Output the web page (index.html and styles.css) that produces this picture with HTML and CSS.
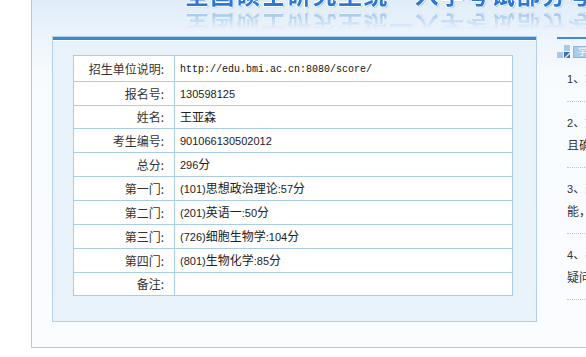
FILE: index.html
```html
<!DOCTYPE html>
<html lang="zh-CN">
<head>
<meta charset="utf-8">
<title>成绩查询</title>
<link rel="stylesheet" href="styles.css">
</head>
<body>
<div class="page">
  <div class="panel">
    <div class="banner">
      <div class="title">全国硕士研究生统一入学考试部分考生成绩查询</div>
    </div>
    <div class="content">
      <div class="main">
        <table class="score">
          <colgroup><col class="c-label"><col class="c-value"></colgroup>
          <tr><td class="lab">招生单位说明:</td><td class="val"><span class="url">http://edu.bmi.ac.cn:8080/score/</span></td></tr>
          <tr><td class="lab">报名号:</td><td class="val"><span class="n">130598125</span></td></tr>
          <tr><td class="lab">姓名:</td><td class="val">王亚森</td></tr>
          <tr><td class="lab">考生编号:</td><td class="val"><span class="n">901066130502012</span></td></tr>
          <tr><td class="lab">总分:</td><td class="val"><span class="n">296</span>分</td></tr>
          <tr><td class="lab">第一门:</td><td class="val"><span class="n">(101)</span>思想政治理论<span class="n">:57</span>分</td></tr>
          <tr><td class="lab">第二门:</td><td class="val"><span class="n">(201)</span>英语一<span class="n">:50</span>分</td></tr>
          <tr><td class="lab">第三门:</td><td class="val"><span class="n">(726)</span>细胞生物学<span class="n">:104</span>分</td></tr>
          <tr><td class="lab">第四门:</td><td class="val"><span class="n">(801)</span>生物化学<span class="n">:85</span>分</td></tr>
          <tr><td class="lab">备注:</td><td class="val"></td></tr>
        </table>
      </div>
      <aside class="side">
        <div class="side-head">
          <svg class="side-icon" width="14" height="13" viewBox="0 0 14 13">
            <rect x="7" y="0" width="6" height="6" fill="#a8c8ec"/>
            <rect x="0" y="7" width="6" height="6" fill="#a8c8ec"/>
            <rect x="7" y="7" width="6" height="6" fill="#3f6fae"/>
            <polygon points="13,7 13,9 9,13 7,13" fill="#dfeaf7"/>
          </svg>
          <span class="tab">学生须知</span>
        </div>
        <ul class="notes">
          <li><span class="n">1</span>、本系统仅提供部分考生成绩查询</li>
          <li><span class="n">2</span>、如对成绩有异议请于规定时间内<br>且确认本人信息无误后提出申请</li>
          <li><span class="n">3</span>、查询结果仅供参考不作为录取依据<br>能，以招生单位正式通知为准</li>
          <li><span class="n">4</span>、考生如有其他问题请咨询招生单位<br>疑问请及时与研招办联系</li>
        </ul>
      </aside>
    </div>
  </div>
  <div class="rule"></div>
</div>
</body>
</html>
```

FILE: styles.css
```css
html, body {
  margin: 0;
  padding: 0;
  overflow: hidden;
  background: #ffffff;
}

body {
  font-family: "Noto Sans CJK SC", "Noto Sans", sans-serif;
  font-size: 12px;
  color: #333333;
}

.page {
  margin-left: 31px;
  width: 1000px;
}

.panel {
  border-left: 1px solid #a9cbea;
  border-bottom: 1px solid #a9cbea;
  background: linear-gradient(to bottom, #dfecf8 0px, #eef5fc 40px, #f8fbfe 80px, #fafcfe 100%);
  padding-bottom: 25px;
}

.banner {
  height: 36px;
  overflow: hidden;
  padding-left: 153px;
}

.title {
  margin-top: -22px;
  height: 32px;
  font-size: 24px;
  line-height: 32px;
  font-weight: bold;
  letter-spacing: 1.5px;
  white-space: nowrap;
  color: #2d78d3;
  text-shadow: 1px 0 0 #fff, -1px 0 0 #fff, 0 1px 0 #fff, 0 -1px 0 #fff, 1px 1px 1px #7fa9d8;
  -webkit-box-reflect: below 0px linear-gradient(to bottom, rgba(0,0,0,0) 40%, rgba(0,0,0,0.2) 72%, rgba(0,0,0,0.42) 100%);
}

.content {
  display: flex;
  align-items: flex-start;
  gap: 20px;
  padding-left: 20px;
}

.main {
  flex: none;
  width: 485px;
  box-sizing: border-box;
  border: 1px solid #b3cfec;
  background: #e8f2fb;
  box-shadow: inset 0 3px 0 #3b8ad1, inset 0 4px 0 #ffffff;
  padding: 18px 0 25px 20px;
}

.score {
  border-collapse: separate;
  border-spacing: 0;
  table-layout: fixed;
  box-sizing: border-box;
  width: 440px;
  border-top: 1px solid #a9cbec;
  border-left: 1px solid #a9cbec;
  background: #ffffff;
}

.c-label { width: 101px; }
.c-value { width: 338px; }

.score td {
  height: 22px;
  padding: 0;
  line-height: 22px;
  border-right: 1px solid #a9cbec;
  border-bottom: 1px solid #a9cbec;
  white-space: nowrap;
  overflow: hidden;
}

.score td.lab {
  text-align: right;
  padding-right: 10px;
  color: #333333;
}

.score td.val {
  padding-left: 5px;
  color: #222222;
}

.n {
  font-family: "Liberation Sans", sans-serif;
  font-size: 11px;
}

.url {
  font-family: "Liberation Mono", monospace;
  font-size: 10px;
  color: #111111;
}

.side {
  flex: none;
  width: 300px;
  margin-top: 1px;
  border-top: 2px solid #3d8bd3;
}

.side-head {
  display: flex;
  align-items: flex-end;
  gap: 2px;
  margin-top: 6px;
}

.side-icon {
  display: block;
}

.tab {
  height: 10px;
  line-height: 10px;
  padding: 0 4px;
  font-size: 9px;
  color: #ffffff;
  background: #a9cbee;
  border: 1px solid #8fb6e0;
}

.notes {
  list-style: none;
  margin: 0 0 0 10px;
  padding: 0;
}

.notes li {
  padding: 9px 0 11px;
  line-height: 22px;
  border-bottom: 1px dotted #c4c4c4;
  color: #333333;
  white-space: nowrap;
}

.rule {
  margin-top: 10px;
  height: 2px;
  background: #a3a3a3;
}
```
